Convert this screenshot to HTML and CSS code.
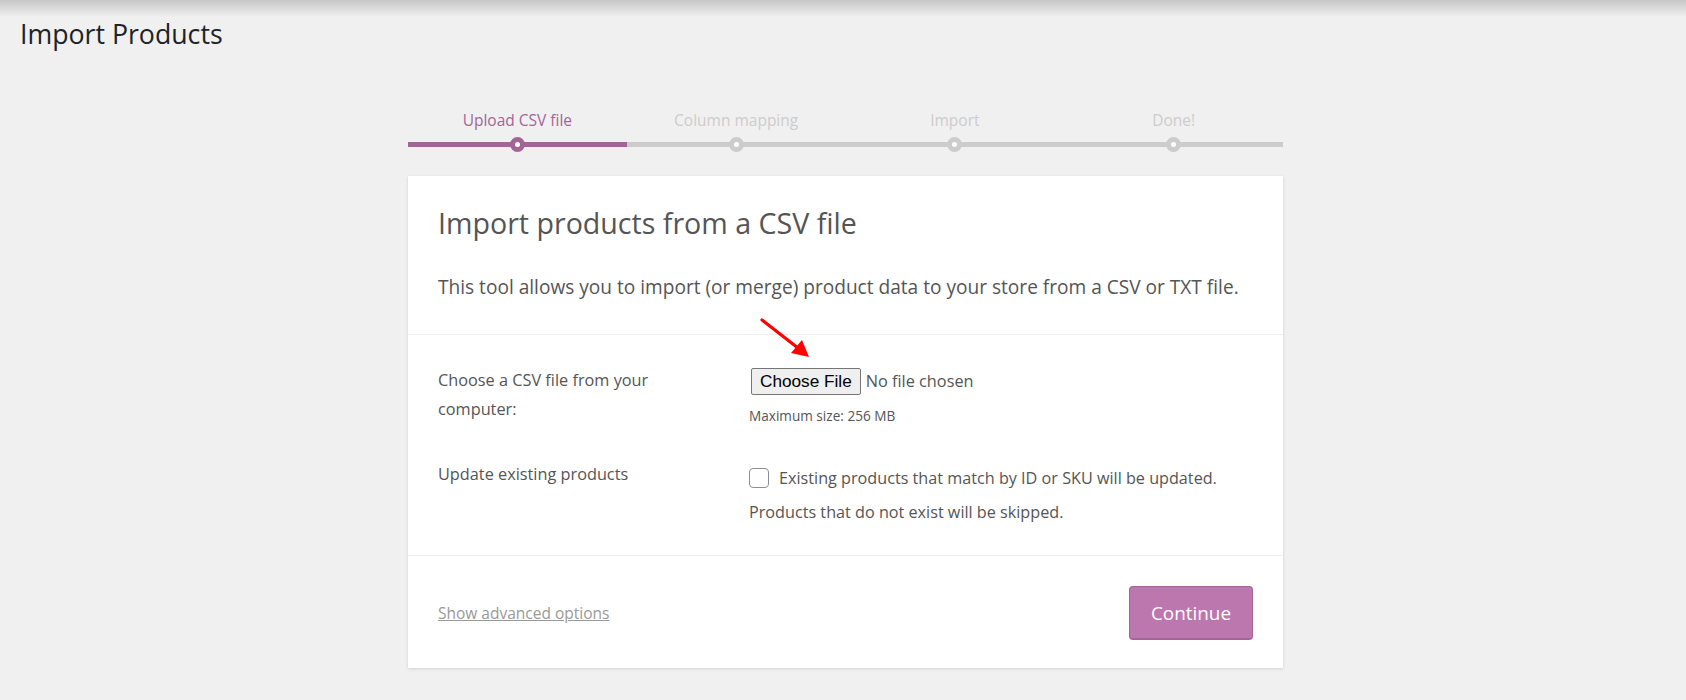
FILE: index.html
```html
<!DOCTYPE html>
<html lang="en">
<head>
<meta charset="utf-8">
<title>Import Products</title>
<link rel="stylesheet" href="styles.css">
</head>
<body>
<div class="wrap">
  <h1 class="page-title">Import Products</h1>
  <div class="importer">
    <ol class="steps">
      <li class="step active">Upload CSV file</li>
      <li class="step">Column mapping</li>
      <li class="step">Import</li>
      <li class="step">Done!</li>
    </ol>
    <div class="card">
      <header class="card-head">
        <h2 class="card-title">Import products from a CSV file</h2>
        <p class="card-intro">This tool allows you to import (or merge) product data to your store from a CSV or TXT file.</p>
      </header>
      <section class="card-body">
        <div class="row">
          <div class="row-label">Choose a CSV file from your computer:</div>
          <div class="row-field">
            <div class="file-input">
              <span class="file-btn">Choose File</span>
              <span class="file-name">No file chosen</span>
              <svg class="arrow" width="60" height="50" viewBox="0 0 60 50" aria-hidden="true">
                <line x1="4" y1="3" x2="40" y2="31" stroke="#f00" stroke-width="3.2" stroke-linecap="round"/>
                <polygon points="51,40 33,36 44,23" fill="#f00"/>
              </svg>
            </div>
            <div class="hint">Maximum size: 256 MB</div>
          </div>
        </div>
        <div class="row row-second">
          <div class="row-label">Update existing products</div>
          <div class="row-field">
            <label class="check-line">
              <span class="checkbox"></span>
              <span>Existing products that match by ID or SKU will be updated.</span>
            </label>
            <div class="check-note">Products that do not exist will be skipped.</div>
          </div>
        </div>
      </section>
      <footer class="card-foot">
        <a class="advanced" href="#">Show advanced options</a>
        <button class="continue" type="button">Continue</button>
      </footer>
    </div>
  </div>
</div>
</body>
</html>
```

FILE: styles.css
```css
*, *::before, *::after { box-sizing: border-box; }

html, body {
  margin: 0;
  padding: 0;
}

body {
  background-color: #f0f0f0;
  background-image: linear-gradient(#c6c6c6, #f0f0f0 17px);
  background-repeat: no-repeat;
  background-size: 100% 17px;
  font-family: "Open Sans", "Noto Sans", sans-serif;
  color: #555;
  min-height: 700px;
}

.wrap {
  padding: 0 15px 0 20px;
}

.page-title {
  margin: 15px 0 0;
  font-size: 26.7px;
  line-height: 37px;
  font-weight: 400;
  color: #1d2327;
}

.importer {
  width: 875px;
  margin: 0 auto;
}

.steps {
  list-style: none;
  margin: 58px 0 0;
  padding: 0;
  display: flex;
}

.step {
  flex: 1;
  position: relative;
  text-align: center;
  font-size: 15.5px;
  line-height: 20px;
  color: #ccc;
  padding-bottom: 12px;
  border-bottom: 5px solid #ccc;
}

.step::before {
  content: "";
  position: absolute;
  left: 50%;
  bottom: -10px;
  width: 15px;
  height: 15px;
  margin-left: -7.5px;
  border-radius: 50%;
  border: 5px solid #ccc;
  background: #fff;
}

.step.active {
  color: #a16696;
  border-bottom-color: #a16696;
}

.step.active::before {
  border-color: #a16696;
}

.card {
  margin-top: 29px;
  background: #fff;
  box-shadow: 0 1px 3px rgba(0, 0, 0, 0.13);
}

.card-head {
  padding: 27px 30px 32px;
  border-bottom: 1px solid #eee;
}

.card-title {
  margin: 0;
  font-size: 28.6px;
  line-height: 39px;
  font-weight: 400;
  color: #555;
}

.card-intro {
  margin: 30px 0 0;
  font-size: 19.1px;
  line-height: 30px;
}

.card-body {
  padding: 31px 30px 28px;
  border-bottom: 1px solid #eee;
}

.row {
  display: flex;
}

.row-second {
  margin-top: 34px;
}

.row-label {
  width: 311px;
  padding-right: 40px;
  font-size: 16.3px;
  line-height: 29px;
}

.row-field {
  flex: 1;
}

.file-input {
  position: relative;
  display: flex;
  align-items: center;
  height: 30px;
}

.file-btn {
  display: inline-block;
  height: 27px;
  padding: 0 8px;
  border: 1px solid #767676;
  border-radius: 2px;
  background: #efefef;
  color: #000;
  font-family: "Liberation Sans", Arial, sans-serif;
  font-size: 17.2px;
  line-height: 25px;
  margin-left: 2px;
}

.file-name {
  margin-left: 5px;
  font-size: 16.3px;
  color: #555;
}

.arrow {
  position: absolute;
  left: 9px;
  top: -49px;
}

.hint {
  margin-top: 9.5px;
  font-size: 13.6px;
  line-height: 20px;
}

.check-line {
  display: flex;
  align-items: center;
  margin-top: 3px;
  font-size: 16.2px;
  line-height: 30px;
}

.checkbox {
  display: inline-block;
  width: 20px;
  height: 20px;
  border: 1px solid #8c8f94;
  border-radius: 4px;
  background: #fff;
  margin-right: 10px;
}

.check-note {
  font-size: 16.2px;
  line-height: 30px;
  margin-top: 4px;
}

.card-foot {
  display: flex;
  align-items: center;
  justify-content: space-between;
  padding: 30.5px 30px 28px;
}

.advanced {
  font-size: 15.5px;
  color: #999;
  text-decoration: underline;
}

.continue {
  width: 124px;
  height: 54px;
  border: 1px solid #a36597;
  border-bottom-width: 2px;
  border-radius: 4px;
  background: #bb77ae;
  color: #fff;
  font-family: "Open Sans", sans-serif;
  font-size: 18.9px;
  cursor: pointer;
}
```
